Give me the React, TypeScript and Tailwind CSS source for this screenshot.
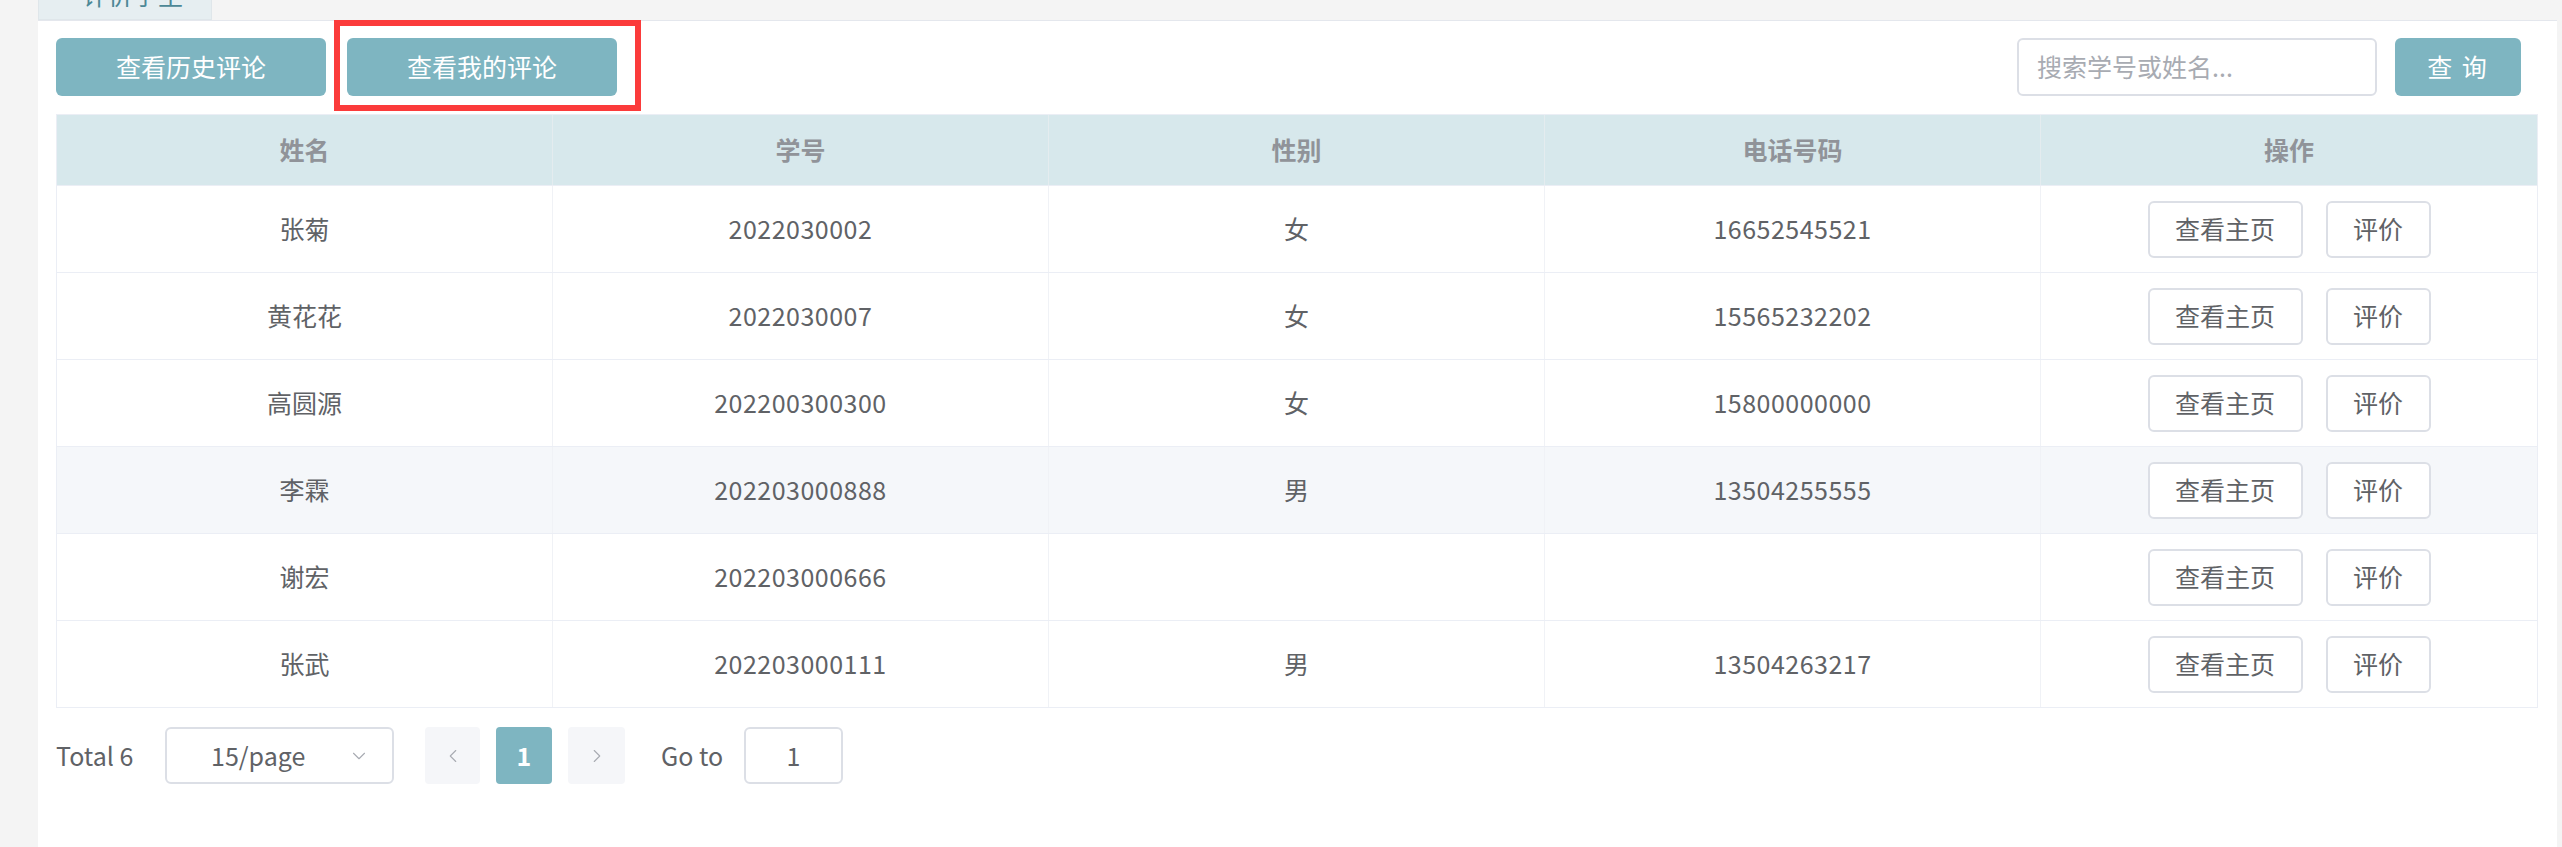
import { ChevronDown, ChevronLeft, ChevronRight } from 'lucide-react';

const students = [
  { name: '张菊', no: '2022030002', sex: '女', phone: '16652545521' },
  { name: '黄花花', no: '2022030007', sex: '女', phone: '15565232202' },
  { name: '高圆源', no: '202200300300', sex: '女', phone: '15800000000' },
  { name: '李霖', no: '202203000888', sex: '男', phone: '13504255555', hover: true },
  { name: '谢宏', no: '202203000666', sex: '', phone: '' },
  { name: '张武', no: '202203000111', sex: '男', phone: '13504263217' },
];

const headers = ['姓名', '学号', '性别', '电话号码', '操作'];

const font = { fontFamily: '"Noto Sans CJK SC", "Noto Sans", sans-serif' };

export default function App() {
  return (
    <div
      className="w-[2562px] h-[847px] bg-[#f4f4f4] flex flex-col pl-[38px] pr-[5px] overflow-hidden text-[#606266] text-[25px]"
      style={font}
    >
      {/* tab strip, mostly scrolled out of view */}
      <div className="h-[20px] flex shrink-0">
        <div className="w-[174px] h-[20px] bg-[#e6eef1] border border-t-0 border-[#dfe6ea] overflow-hidden relative">
          <span className="absolute left-[44px] top-[-26px] text-[25px] text-[#4d8896] leading-[40px]">
            评价学生
          </span>
        </div>
      </div>

      <div className="relative flex-1 bg-white border-t border-[#e4e7ed] pl-[18px] pr-[19px]">
        {/* toolbar */}
        <div className="flex items-center justify-between mt-[17px] h-[58px] pr-[17px]">
          <div className="flex gap-[21px]">
            <button className="w-[270px] h-[58px] rounded-[6px] bg-[#7eb5c1] text-white">
              查看历史评论
            </button>
            <button className="w-[270px] h-[58px] rounded-[6px] bg-[#7eb5c1] text-white">
              查看我的评论
            </button>
          </div>
          <div className="flex gap-[18px]">
            <div className="w-[360px] h-[58px] rounded-[6px] border-2 border-[#dcdfe6] flex items-center px-[18px] text-[#a8abb2]">
              搜索学号或姓名...
            </div>
            <button className="w-[126px] h-[58px] rounded-[6px] bg-[#7eb5c1] text-white tracking-[2px]">
              查 询
            </button>
          </div>
        </div>

        {/* table */}
        <div className="mt-[18px] border border-[#ebeef5] border-b-0">
          <div className="grid grid-cols-5 h-[71px] bg-[#d7e8ec] border-b border-[#ebeef5]">
            {headers.map((h, i) => (
              <div
                key={h}
                className={`flex items-center justify-center font-bold text-[#909399] ${
                  i < 4 ? 'border-r border-[#e4ecef]' : ''
                }`}
              >
                {h}
              </div>
            ))}
          </div>
          {students.map((s) => (
            <div
              key={s.no}
              className={`grid grid-cols-5 h-[87px] border-b border-[#ebeef5] ${
                s.hover ? 'bg-[#f5f7fa]' : 'bg-white'
              }`}
            >
              <div className="flex items-center justify-center border-r border-[#f0f2f6]">{s.name}</div>
              <div className="flex items-center justify-center border-r border-[#f0f2f6] tracking-[0.5px]">{s.no}</div>
              <div className="flex items-center justify-center border-r border-[#f0f2f6]">{s.sex}</div>
              <div className="flex items-center justify-center border-r border-[#f0f2f6] tracking-[0.5px]">{s.phone}</div>
              <div className="flex items-center justify-center gap-[23px]">
                <button className="w-[155px] h-[57px] rounded-[6px] border-2 border-[#dcdfe6] bg-white">
                  查看主页
                </button>
                <button className="w-[105px] h-[57px] rounded-[6px] border-2 border-[#dcdfe6] bg-white">
                  评价
                </button>
              </div>
            </div>
          ))}
        </div>

        {/* pagination */}
        <div className="flex items-center mt-[19px] h-[57px]">
          <span className="w-[80px] whitespace-nowrap">Total 6</span>
          <div className="ml-[29px] w-[229px] h-[57px] rounded-[6px] border-2 border-[#dcdfe6] flex items-center pl-[44px] pr-[22px] justify-between">
            <span>15/page</span>
            <ChevronDown size={22} strokeWidth={1.2} className="text-[#a8abb2]" />
          </div>
          <div className="ml-[31px] w-[55px] h-[57px] rounded-[4px] bg-[#f5f6f9] flex items-center justify-center">
            <ChevronLeft size={22} strokeWidth={1.2} className="text-[#a8abb2]" />
          </div>
          <div className="ml-[16px] w-[56px] h-[57px] rounded-[4px] bg-[#7eb5c1] flex items-center justify-center text-white font-bold">
            1
          </div>
          <div className="ml-[16px] w-[57px] h-[57px] rounded-[4px] bg-[#f5f6f9] flex items-center justify-center">
            <ChevronRight size={22} strokeWidth={1.2} className="text-[#a8abb2]" />
          </div>
          <span className="ml-[36px] w-[67px] whitespace-nowrap">Go to</span>
          <div className="ml-[16px] w-[99px] h-[57px] rounded-[6px] border-2 border-[#dcdfe6] flex items-center justify-center">
            1
          </div>
        </div>

        {/* annotation box */}
        <div className="absolute left-[296px] top-[-1px] w-[307px] h-[91px] border-[6px] border-[#fb3b3b]" />
      </div>
    </div>
  );
}
